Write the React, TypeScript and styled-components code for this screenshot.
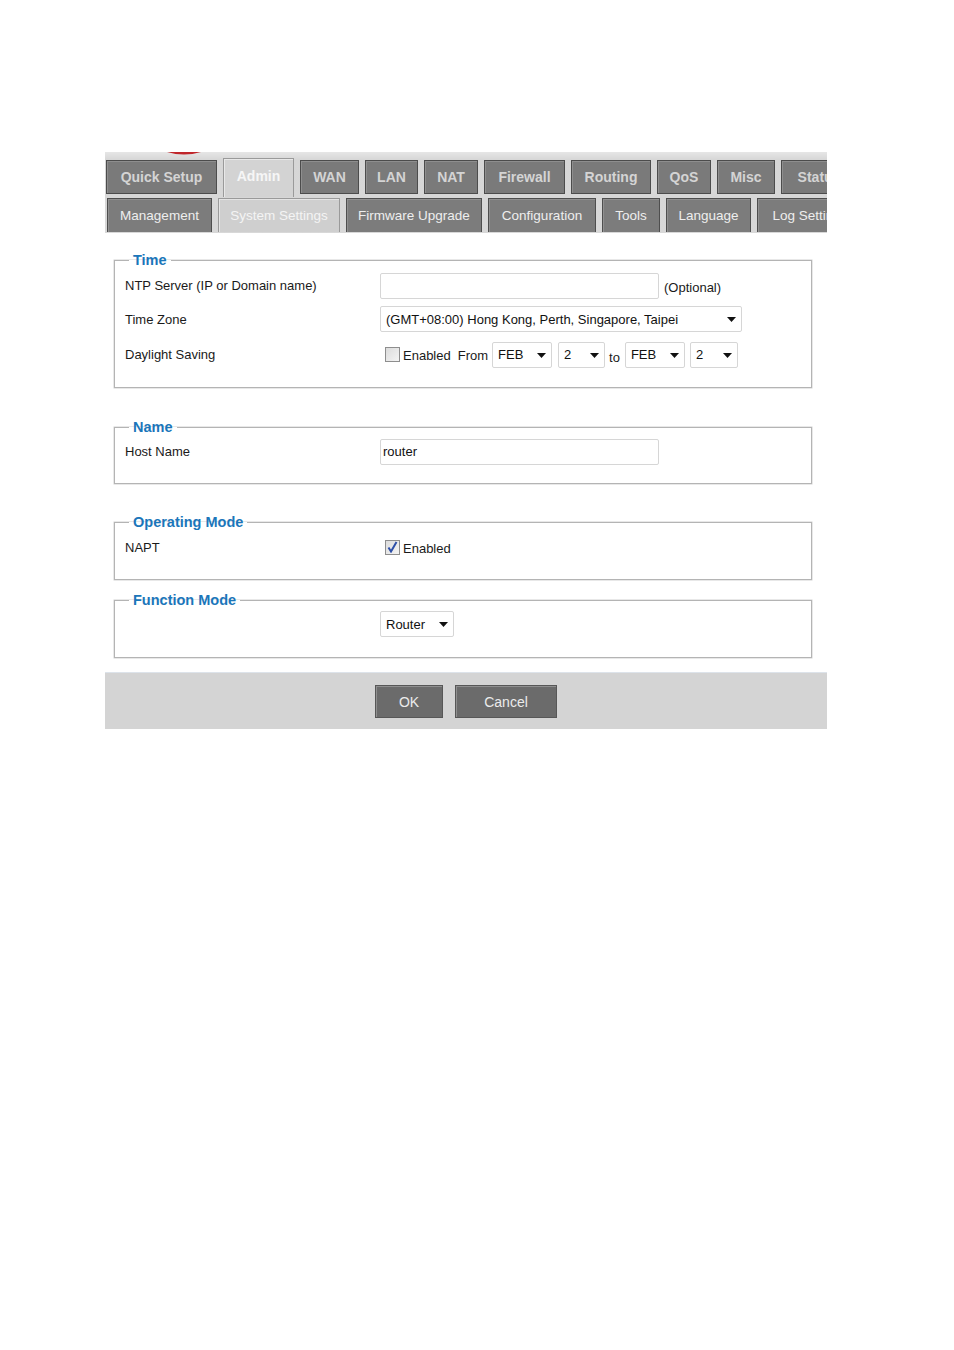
import React from "react";
import styled, { createGlobalStyle } from "styled-components";

const Global = createGlobalStyle`
  html, body { margin: 0; padding: 0; background: #ffffff; }
  body { font-family: "Liberation Sans", Arial, sans-serif; color: #1a1a1a; }
`;

const Page = styled.div`
  padding: 152px 0 0 105px;
`;

const Panel = styled.div`
  width: 722px;
  overflow: hidden;
  background: #ffffff;
`;

const Header = styled.div`
  position: relative;
  background: #d9d9d9;
  padding-bottom: 1px;
  background-image: linear-gradient(#e6e6e6, #d6d6d6 8px, #d8d8d8);
`;

const LogoTip = styled.svg`
  position: absolute;
  left: 62px;
  top: 0;
`;

const MainRow = styled.div`
  display: flex;
  align-items: flex-start;
  gap: 6px;
  height: 39px;
  padding: 6px 0 0 1px;
`;

const MainTab = styled.div<{ $w: number; $active?: boolean }>`
  flex: 0 0 ${(p) => p.$w}px;
  box-sizing: border-box;
  height: ${(p) => (p.$active ? 39 : 34)}px;
  margin-top: ${(p) => (p.$active ? 0 : 2)}px;
  display: flex;
  align-items: center;
  justify-content: center;
  padding-bottom: ${(p) => (p.$active ? 4 : 0)}px;
  font-size: 14px;
  font-weight: bold;
  white-space: nowrap;
  color: ${(p) => (p.$active ? "#f6f6f6" : "#d4d4d4")};
  background: ${(p) => (p.$active ? "#d3d3d3" : "#7a7a7a")};
  border: 1px solid ${(p) => (p.$active ? "#9a9a9a" : "#4c4c4c")};
  border-bottom: ${(p) => (p.$active ? "none" : "1px solid #4c4c4c")};
  box-shadow: ${(p) => (p.$active ? "inset 1px 1px 0 #e8e8e8" : "inset 1px 1px 0 #8e8e8e")};
`;

const SubRow = styled.div`
  display: flex;
  gap: 6px;
  height: 34px;
  padding: 1px 0 0 2px;
`;

const SubTab = styled.div<{ $w: number; $active?: boolean }>`
  flex: 0 0 ${(p) => p.$w}px;
  box-sizing: border-box;
  height: 34px;
  display: flex;
  align-items: center;
  justify-content: center;
  font-size: 13.5px;
  white-space: nowrap;
  color: ${(p) => (p.$active ? "#f4f4f4" : "#eeeeee")};
  background: ${(p) => (p.$active ? "#cfcfcf" : "#7c7c7c")};
  border: 1px solid ${(p) => (p.$active ? "#9a9a9a" : "#4e4e4e")};
  border-bottom: none;
  box-shadow: ${(p) => (p.$active ? "inset 1px 1px 0 #e4e4e4" : "inset 1px 1px 0 #909090")};
`;

const Content = styled.div`
  padding: 19px 15px 14px 9px;
  display: flex;
  flex-direction: column;
`;

const Group = styled.fieldset<{ $gap: number; $pb: number }>`
  margin: ${(p) => p.$gap}px 0 0 0;
  padding: 0 10px ${(p) => p.$pb}px 10px;
  border: 1px solid #b4b4b4;
  box-shadow: 0 0 0 0.5px #d0d0d0;
  min-width: 0;
`;

const Legend = styled.legend`
  margin-left: 4px;
  padding: 0 4px;
  font-size: 14.5px;
  line-height: 17px;
  font-weight: bold;
  color: #1b76ba;
`;

const Row = styled.div<{ $h?: number }>`
  display: flex;
  align-items: center;
  height: ${(p) => p.$h ?? 34}px;
  font-size: 13px;
`;

const Label = styled.div`
  flex: 0 0 255px;
  color: #1a1a1a;
`;

const Field = styled.div`
  display: flex;
  align-items: center;
`;

const TextInput = styled.input<{ $w: number }>`
  box-sizing: border-box;
  width: ${(p) => p.$w}px;
  height: 26px;
  border: 1px solid #d6d6d6;
  border-radius: 2px;
  padding: 0 2px;
  font-family: "Liberation Sans", Arial, sans-serif;
  font-size: 13px;
  color: #111;
  background: #fff;
  outline: none;
`;

const Note = styled.span`
  margin-left: 5px;
  padding-top: 3px;
  font-size: 13px;
`;

const SelectWrap = styled.div<{ $w: number; $ml?: number }>`
  position: relative;
  width: ${(p) => p.$w}px;
  margin-left: ${(p) => p.$ml ?? 0}px;
`;

const Select = styled.select`
  appearance: none;
  -webkit-appearance: none;
  box-sizing: border-box;
  width: 100%;
  height: 26px;
  border: 1px solid #d6d6d6;
  border-radius: 2px;
  padding: 0 0 0 5px;
  font-family: "Liberation Sans", Arial, sans-serif;
  font-size: 13px;
  color: #111;
  background: #fff;
  outline: none;
`;

const Arrow = styled.svg`
  position: absolute;
  right: 6px;
  top: 11px;
  pointer-events: none;
`;

const Check = styled.span`
  box-sizing: border-box;
  width: 15px;
  height: 15px;
  margin-left: 5px;
  margin-right: 3px;
  border: 1px solid #8e8e8e;
  background: linear-gradient(135deg, #dcdcdc, #f4f4f4);
  display: inline-flex;
  align-items: center;
  justify-content: center;
`;

const Text = styled.span<{ $ml?: number; $mr?: number; $pt?: number }>`
  margin-left: ${(p) => p.$ml ?? 0}px;
  margin-right: ${(p) => p.$mr ?? 0}px;
  padding-top: ${(p) => p.$pt ?? 2}px;
  font-size: 13px;
`;

const Footer = styled.div`
  display: flex;
  justify-content: center;
  gap: 12px;
  height: 57px;
  box-sizing: border-box;
  padding: 12px 0 0 0;
  background: #d4d4d4;
  border-top: 1px solid #dde3ea;
`;

const Button = styled.button<{ $w: number }>`
  width: ${(p) => p.$w}px;
  height: 33px;
  border: 1px solid #575757;
  box-shadow: inset 1px 1px 0 #8f8f8f;
  background: #6b6b6b;
  color: #ececec;
  font-family: "Liberation Sans", Arial, sans-serif;
  font-size: 14px;
  cursor: pointer;
  padding: 0;
`;

const mainTabs: [string, number][] = [
  ["Quick Setup", 111],
  ["Admin", 71],
  ["WAN", 59],
  ["LAN", 53],
  ["NAT", 54],
  ["Firewall", 81],
  ["Routing", 80],
  ["QoS", 54],
  ["Misc", 58],
  ["Status", 76],
];

const subTabs: [string, number][] = [
  ["Management", 105],
  ["System Settings", 122],
  ["Firmware Upgrade", 136],
  ["Configuration", 108],
  ["Tools", 58],
  ["Language", 85],
  ["Log Settings", 106],
];

const DownArrow = () => (
  <Arrow width="9" height="5" viewBox="0 0 9 5">
    <path d="M0 0 H9 L4.5 5 Z" fill="#111" />
  </Arrow>
);

const Dropdown = ({ w, value, ml }: { w: number; value: string; ml?: number }) => (
  <SelectWrap $w={w} $ml={ml}>
    <Select defaultValue={value}>
      <option value={value}>{value}</option>
    </Select>
    <DownArrow />
  </SelectWrap>
);

const CheckBox = ({ on }: { on?: boolean }) => (
  <Check>
    {on && (
      <svg width="11" height="12" viewBox="0 0 11 12">
        <path d="M1.5 6.5 L4 10.5 L9.5 1" fill="none" stroke="#2d4fa8" strokeWidth="2" />
      </svg>
    )}
  </Check>
);

export default function App() {
  return (
    <>
      <Global />
      <Page>
        <Panel>
          <Header>
            <LogoTip width="34" height="4" viewBox="0 0 34 4">
              <path d="M0 0 Q17 5 34 0 Z" fill="#c0262b" />
            </LogoTip>
            <MainRow>
              {mainTabs.map(([t, w]) => (
                <MainTab key={t} $w={w} $active={t === "Admin"}>
                  {t}
                </MainTab>
              ))}
            </MainRow>
            <SubRow>
              {subTabs.map(([t, w]) => (
                <SubTab key={t} $w={w} $active={t === "System Settings"}>
                  {t}
                </SubTab>
              ))}
            </SubRow>
          </Header>
          <Content>
            <Group $gap={0} $pb={14}>
              <Legend>Time</Legend>
              <Row $h={33}>
                <Label>NTP Server (IP or Domain name)</Label>
                <Field>
                  <TextInput $w={279} defaultValue="" />
                  <Note>(Optional)</Note>
                </Field>
              </Row>
              <Row>
                <Label>Time Zone</Label>
                <Dropdown w={362} value="(GMT+08:00) Hong Kong, Perth, Singapore, Taipei" />
              </Row>
              <Row $h={37}>
                <Label>Daylight Saving</Label>
                <Field>
                  <CheckBox />
                  <Text>Enabled</Text>
                  <Text $ml={7} $mr={4}>From</Text>
                  <Dropdown w={60} value="FEB" />
                  <Dropdown w={47} value="2" ml={6} />
                  <Text $ml={4} $mr={5} $pt={5}>to</Text>
                  <Dropdown w={60} value="FEB" />
                  <Dropdown w={48} value="2" ml={5} />
                </Field>
              </Row>
            </Group>

            <Group $gap={31} $pb={16}>
              <Legend>Name</Legend>
              <Row $h={31}>
                <Label>Host Name</Label>
                <TextInput $w={279} defaultValue="router" />
              </Row>
            </Group>

            <Group $gap={30} $pb={16}>
              <Legend>Operating Mode</Legend>
              <Row $h={32}>
                <Label>NAPT</Label>
                <Field>
                  <CheckBox on />
                  <Text>Enabled</Text>
                </Field>
              </Row>
            </Group>

            <Group $gap={12} $pb={18}>
              <Legend>Function Mode</Legend>
              <Row $h={30}>
                <Label />
                <Dropdown w={74} value="Router" />
              </Row>
            </Group>
          </Content>
          <Footer>
            <Button $w={68}>OK</Button>
            <Button $w={102}>Cancel</Button>
          </Footer>
        </Panel>
      </Page>
    </>
  );
}
